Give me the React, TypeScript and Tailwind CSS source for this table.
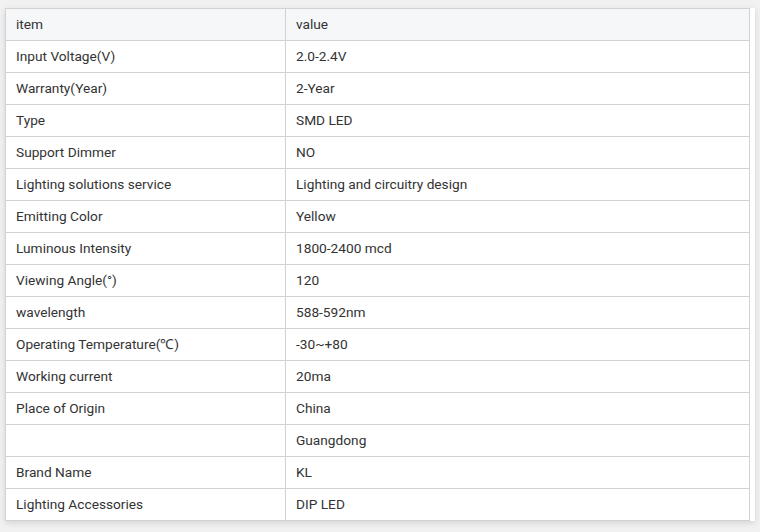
const rows: [string, string][] = [
  ['Input Voltage(V)', '2.0-2.4V'],
  ['Warranty(Year)', '2-Year'],
  ['Type', 'SMD LED'],
  ['Support Dimmer', 'NO'],
  ['Lighting solutions service', 'Lighting and circuitry design'],
  ['Emitting Color', 'Yellow'],
  ['Luminous Intensity', '1800-2400 mcd'],
  ['Viewing Angle(°)', '120'],
  ['wavelength', '588-592nm'],
  ['Operating Temperature(℃)', '-30~+80'],
  ['Working current', '20ma'],
  ['Place of Origin', 'China'],
  ['', 'Guangdong'],
  ['Brand Name', 'KL'],
  ['Lighting Accessories', 'DIP LED'],
];

export default function App() {
  return (
    <div className="h-[532px] w-[760px] bg-[#f1f1f1] pt-2 pl-[5px] font-['Roboto',sans-serif] text-[13.7px] text-[#333]">
      <div className="w-[750px] bg-white shadow-[0_2px_6px_rgba(0,0,0,0.12)]">
        <table className="w-[745px] border-collapse table-fixed">
          <colgroup>
            <col className="w-[280px]" />
            <col />
          </colgroup>
          <thead>
            <tr className="h-[32px] bg-[#f6f7f9]">
              <th className="border border-[#d2d2d2] px-[10px] text-left font-normal">item</th>
              <th className="border border-[#d2d2d2] px-[10px] text-left font-normal">value</th>
            </tr>
          </thead>
          <tbody>
            {rows.map(([k, v], i) => (
              <tr key={i} className="h-[32px]">
                <td className="border border-[#d2d2d2] px-[10px]">{k}</td>
                <td className="border border-[#d2d2d2] px-[10px]">{v}</td>
              </tr>
            ))}
          </tbody>
        </table>
      </div>
    </div>
  );
}
